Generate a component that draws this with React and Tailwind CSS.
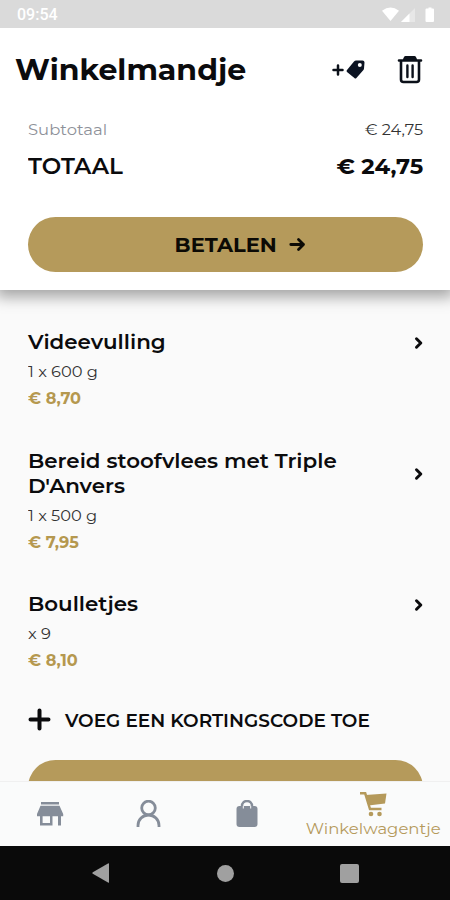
const items = [
  { title: ["Videevulling"], meta: "1 x 600 g", price: "€ 8,70" },
  { title: ["Bereid stoofvlees met Triple", "D'Anvers"], meta: "1 x 500 g", price: "€ 7,95" },
  { title: ["Boulletjes"], meta: "x 9", price: "€ 8,10" },
];

function StatusBar() {
  return (
    <div className="relative z-20 flex h-[28px] shrink-0 items-center justify-between bg-[#dadada] pl-[17px] pr-[15px] pt-[2px] text-white">
      <span className="font-[Roboto] text-[16px] font-medium leading-none">09:54</span>
      <svg width="54" height="16" viewBox="0 0 54 16" fill="currentColor">
        <path d="M1 3.8Q9.500 -2.600 18 3.8L9.500 14Z" />
        <path d="M34 1V15H20Z" opacity=".35" />
        <path d="M28.500 6.500V15H20Z" />
        <path d="M45.500 1.500h2V.5h3v1h1.500q1 0 1 1v11.500q0 1-1 1h-6.500q-1 0-1-1V2.500q0-1 1-1Z" />
      </svg>
    </div>
  );
}

function Header() {
  return (
    <header className="relative z-10 h-[262px] shrink-0 bg-white shadow-[0_3px_14px_4px_rgba(0,0,0,0.35)]">
      <div className="flex h-[84px] items-center justify-between pl-[15px] pr-[26px]">
        <h1 className="origin-left scale-x-[1.06] whitespace-nowrap text-[28.300px] font-bold">Winkelmandje</h1>
        <div className="flex items-center gap-[32px]">
          <svg width="34" height="24" viewBox="0 0 34 24">
            <path d="M1.500 12H10.500M6 7.500V16.500" stroke="#0b1019" strokeWidth="2.5" strokeLinecap="round" />
            <path fillRule="evenodd" d="M24 2.500H30.500Q32.500 2.500 32.500 4.500L32 10.500Q32 11.500 31 12.500L24.400 20q-1 1-2 0L15 14q-1-1 0-2L22 3.500Q23 2.500 24 2.500ZM27.800 5a2 2 0 1 0 0 4 2 2 0 1 0 0-4Z" fill="#0b1322" />
          </svg>
          <svg className="-mt-[3px] -ml-px mr-px" width="26" height="30" viewBox="0 0 26 30" fill="none" stroke="#0b1019" strokeWidth="2.6" strokeLinecap="round" strokeLinejoin="round">
            <path d="M2 6.500H24M4 7V25.500Q4 28 6.500 28H19.500Q22 28 22 25.500V7" />
            <path d="M7.500 5.500 8.500 3.500H17.500L18.500 5.500Z" strokeWidth="3" />
            <path d="M10.400 11.500V23M15.600 11.500V23" strokeWidth="2.4" />
          </svg>
        </div>
      </div>
      <div className="pl-7 pr-[27px]">
        <div className="mt-[4px] flex h-[28px] items-center justify-between text-[15.500px]">
          <span className="origin-left scale-x-[1.06] text-[#8e9199]">Subtotaal</span>
          <span className="origin-right scale-x-[1.04] text-[#333]">€ 24,75</span>
        </div>
        <div className="mt-[6px] flex h-[32px] items-center justify-between text-[22px] font-bold">
          <span className="origin-left scale-x-[1.05] font-semibold">TOTAAL</span>
          <span className="origin-right scale-x-[1.03]">€ 24,75</span>
        </div>
        <button className="mt-[35px] flex h-[55px] w-full items-center justify-center gap-[15px] rounded-full bg-[#b59a5b] pl-[32px]">
          <span className="scale-x-[1.05] text-[20px] font-bold text-[#0c0a05]">BETALEN</span>
          <svg width="17" height="16" viewBox="0 0 17 16" fill="none" stroke="#0c0a05" strokeWidth="2.8" strokeLinecap="round" strokeLinejoin="round">
            <path d="M1.800 7.500H14.500M9.500 2.500 14.500 7.500 9.500 12.500" />
          </svg>
        </button>
      </div>
    </header>
  );
}

function Item({ item }) {
  return (
    <article>
      <div className="flex items-center justify-between text-[20.200px] font-semibold leading-[25px]">
        <h2 className="origin-left scale-x-[1.06] whitespace-nowrap">
          {item.title.map((line) => (
            <span key={line} className="block">{line}</span>
          ))}
        </h2>
        <svg className="mt-[3px] -mr-[1px]" width="11" height="14" viewBox="0 0 11 14" fill="none" stroke="#0b0b0d" strokeWidth="3" strokeLinecap="round" strokeLinejoin="round">
          <path d="M3.500 2.800 7.800 7 3.500 11.200" />
        </svg>
      </div>
      <div className="mt-[4px] flex h-[28px] items-center text-[15.500px] text-[#333]">
        <span className="origin-left scale-x-[1.05]">{item.meta}</span>
      </div>
      <div className="flex h-[26px] items-center text-[15.500px] font-bold text-[#b5984f]">
        <span className="origin-left scale-x-[1.04]">{item.price}</span>
      </div>
    </article>
  );
}

function TabBar() {
  return (
    <nav className="flex h-[65px] shrink-0 border-t border-[#f0f0f0] bg-[#fafbfb] text-[#858d99]">
      <div className="flex w-[99px] items-center justify-center">
        <svg width="28" height="26" viewBox="0 0 28 26" fill="currentColor">
          <path d="M5 1H23V3.500H5ZM4.500 4.800H23.500L27.200 13V15.300H25V24.500H22V15.300H16.500V24.500H4V15.300H1V13ZM6.600 15.300V22H14V15.300Z" fillRule="evenodd" />
        </svg>
      </div>
      <div className="flex w-[99px] items-center justify-center">
        <svg className="-mt-px" width="26" height="28" viewBox="0 0 26 28" fill="none" stroke="currentColor" strokeWidth="2.8">
          <circle cx="12.500" cy="8" r="6.800" />
          <path d="M2 27V25.500a10.500 10.500 0 0 1 21 0V27" />
        </svg>
      </div>
      <div className="flex w-[99px] items-center justify-center">
        <svg className="-ml-[2px]" width="22" height="28" viewBox="0 0 22 28">
          <path d="M6 10V6a5 5 0 0 1 10 0V10" fill="none" stroke="currentColor" strokeWidth="2.5" />
          <rect x="0.500" y="6" width="21" height="21" rx="3" fill="currentColor" />
          <path d="M7.300 6V8.500M14.700 6V8.500" stroke="#fafbfb" strokeWidth="1" />
        </svg>
      </div>
      <div className="flex w-[153px] flex-col items-center pt-[9px] text-[#b59a5b]">
        <svg className="-ml-px" width="28" height="26" viewBox="0 0 28 26">
          <path d="M1 2.300H6.200L11 18H22.500" fill="none" stroke="currentColor" strokeWidth="2.500" />
          <path d="M6.500 4 27.500 2.500 26 12.500 9.500 14.500Z" fill="currentColor" />
          <circle cx="12" cy="23" r="2.300" fill="currentColor" />
          <circle cx="20.500" cy="23" r="2.300" fill="currentColor" />
        </svg>
        <span className="mt-[2px] scale-x-[1.05] text-[15.700px] leading-[20px]">Winkelwagentje</span>
      </div>
    </nav>
  );
}

function SystemBar() {
  return (
    <div className="flex h-[54px] shrink-0 items-center justify-center gap-[106px] bg-[#0a0a0a] pl-px text-[#a0a0a0]">
      <svg className="-ml-px mr-px" width="18" height="20" viewBox="0 0 18 20" fill="currentColor">
        <path d="M17 .8V19.200q0 .8-1 .4L.8 10.800q-1-.8 0-1.600L16 .4q1-.4 1 .4Z" />
      </svg>
      <div className="size-[17px] rounded-full bg-[#a0a0a0]" />
      <div className="size-[19px] rounded-[2px] bg-[#a0a0a0]" />
    </div>
  );
}

export default function App() {
  return (
    <div className="flex h-[900px] w-[450px] flex-col overflow-hidden bg-[#fafafa] font-['Montserrat','Inter',sans-serif] text-[#0b0b0d]">
      <StatusBar />
      <Header />
      <main className="min-h-0 flex-1 overflow-hidden pl-7 pr-[27px] pt-[39px]">
        <div className="flex flex-col gap-[35.500px]">
          {items.map((item) => (
            <Item key={item.price} item={item} />
          ))}
        </div>
        <div className="mt-[33px] flex h-[26px] items-center gap-[14px]">
          <svg width="23" height="24" viewBox="0 0 23 24" stroke="#0b0b0d" strokeWidth="4" strokeLinecap="round">
            <path d="M2.500 11.500H20.500M11.500 2.500V20.500" />
          </svg>
          <span className="mt-[2px] origin-left scale-x-[1.04] whitespace-nowrap text-[17.800px] font-semibold">VOEG EEN KORTINGSCODE TOE</span>
        </div>
        <div className="mt-[27px] h-[55px] rounded-full bg-[#b59a5b]" />
      </main>
      <TabBar />
      <SystemBar />
    </div>
  );
}
